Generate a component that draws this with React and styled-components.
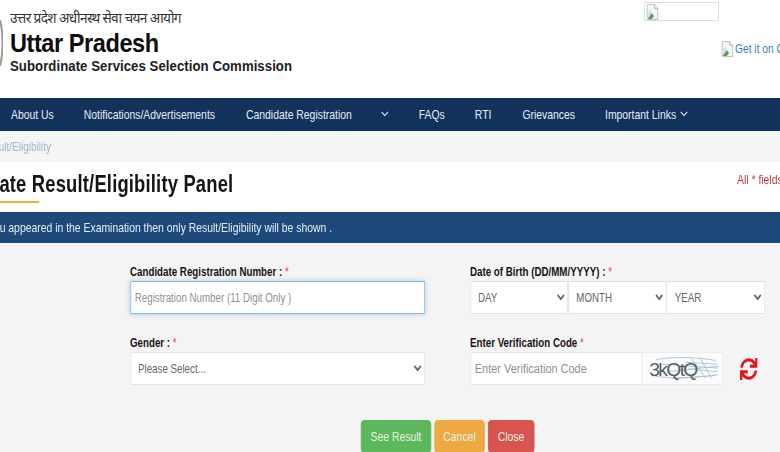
import React from "react";
import styled, { createGlobalStyle } from "styled-components";
import { FaSync } from "react-icons/fa";

/* The reference is a horizontally condensed capture: the lower part of the page is
   laid out in a wider space and condensed as a whole, so X() converts real pixels. */
const K = 0.8;
const X = (n) => `${n / K}px`;

const Global = createGlobalStyle`
  html, body { margin: 0; padding: 0; background: #fff; }
  * { box-sizing: border-box; }
  body { font-family: "Liberation Sans", Arial, sans-serif; }
`;
const Page = styled.div`
  width: 780px; height: 452px; overflow: hidden; display: flex; flex-direction: column;
  background: #fff; filter: blur(0.35px);
`;
const Header = styled.header`
  height: 98px; flex: none; display: flex; justify-content: space-between; overflow: hidden;
`;
const Brand = styled.div`
  display: flex; align-items: flex-start; gap: 7px; margin-left: -1px;
`;
const Emblem = styled.svg`
  width: 4px; height: 46px; margin-top: 20px; flex: none;
`;
const BrandText = styled.div`
  display: flex; flex-direction: column; padding-top: 8px; color: #111;
  transform: scaleX(0.94); transform-origin: left top; white-space: nowrap;
`;
const Hindi = styled.div`
  font-family: "Noto Sans", "Noto Sans Devanagari", "Lohit Devanagari", "Liberation Serif", serif;
  font-size: 14.5px; line-height: 19px; color: #333; letter-spacing: -0.65px;
`;
const BrandName = styled.div`
  font-size: 25px; line-height: 26px; font-weight: 700; margin-top: 3px; color: #0d0d0d; letter-spacing: -0.45px;
`;
const BrandSub = styled.div`
  font-size: 14px; line-height: 18px; font-weight: 700; margin-top: 1px; letter-spacing: 0.07px; color: #1c1c1c;
`;
const Aside = styled.div`
  display: flex; flex-direction: column; align-items: flex-end; width: 136px; flex: none; overflow: hidden;
`;
const BrokenBox = styled.div`
  width: 75px; height: 19px; margin: 2px 61px 0 0; border: 1px solid #ddd; display: flex; padding: 1px;
`;
const StoreLink = styled.div`
  display: flex; align-items: center; align-self: flex-start; margin: 20px 0 0 77px; white-space: nowrap;
  font-size: 12.5px; color: #3d7ab5;
`;
const StoreText = styled.span`
  display: inline-block; transform: scaleX(0.82); transform-origin: left center; margin-left: 1px;
`;
const Condensed = styled.div`
  width: ${X(780)}; flex: 1; min-height: 0; display: flex; flex-direction: column;
  transform: scaleX(${K}); transform-origin: left top;
`;
const Nav = styled.nav`
  height: 33px; flex: none; background: linear-gradient(#12335c, #103159); border-top: 1px solid #0d2a50;
  display: flex; align-items: center; padding: 0 0 2px ${X(11)}; color: #e9eef4; font-size: 13px;
`;
const NavItem = styled.div`
  margin-right: ${(p) => X(p.$gap)}; display: flex; align-items: center; gap: ${X(4)}; white-space: nowrap;
`;
const CrumbBand = styled.div`
  background: #f5f5f5; flex: none;
`;
const Crumb = styled.div`
  height: 31px; display: flex; align-items: center; justify-content: flex-end;
  width: ${X(51)}; white-space: nowrap; color: #9db5cf; font-size: 12.5px;
`;
const TitleRow = styled.div`
  height: 50px; flex: none; display: flex; justify-content: space-between; background: #fff; overflow: hidden;
`;
const TitleWrap = styled.div`
  margin-left: ${X(-64)}; padding-top: 9px;
`;
const Title = styled.h1`
  margin: 0; font-size: 23px; line-height: 26px; font-weight: 700; color: #141414; white-space: nowrap; letter-spacing: 0.22px;
`;
const TitleRule = styled.div`
  width: ${X(103)}; height: 2px; background: #ecb33c; margin-top: 4px;
`;
const Required = styled.div`
  flex: none; width: ${X(43)}; padding-top: 10px; font-size: 13px; color: #c23a3f; white-space: nowrap;
`;
const Notice = styled.div`
  height: 31px; flex: none; background: #1d4a7a; color: #e6edf4; font-size: 13px;
  display: flex; align-items: center; white-space: nowrap; overflow: hidden;
`;
const NoticeText = styled.span`
  margin-left: ${X(-20)};
`;
const Body = styled.div`
  flex: 1; background: #f5f4f4; padding: 22px 0 0 ${X(130)}; display: flex; flex-direction: column;
`;
const Grid = styled.div`
  display: grid; grid-template-columns: ${X(295)} ${X(295)}; column-gap: ${X(45)}; row-gap: 22px;
`;
const Field = styled.div`
  display: flex; flex-direction: column;
`;
const Label = styled.label`
  font-size: 12.2px; line-height: 14px; font-weight: 700; color: #1b1216; height: 16px; white-space: nowrap;
`;
const Star = styled.span`
  color: #d9534f; font-weight: 400;
`;
const Input = styled.input`
  height: 33px; width: 100%; background: #fff; border: 1px solid ${(p) => (p.$focus ? "#86b7dd" : "#e3e3e3")};
  box-shadow: ${(p) => (p.$focus ? "0 0 6px rgba(102,175,233,.55)" : "none")};
  font: 12.2px "Liberation Sans", Arial, sans-serif; padding: 0 ${X(4)}; outline: none; color: #555;
  &::placeholder { color: #8f8f8f; opacity: 1; }
`;
const Select = styled.select`
  height: 33px; width: 100%; background-color: #fff; border: 1px solid #e3e3e3; border-radius: 0; color: #666;
  font: 12.2px "Liberation Sans", Arial, sans-serif; padding: 0 5px; outline: none;
`;
const DateRow = styled.div`
  display: grid; grid-template-columns: repeat(3, 1fr);
`;
const CodeRow = styled.div`
  display: flex; align-items: center;
`;
const CodeInput = styled(Input)`
  width: ${X(172)}; flex: none; font-size: 13.7px;
`;
const Captcha = styled.svg`
  width: ${X(81)}; height: 33px; flex: none; background: #fbfbfb; border: 1px solid #ececec; border-left: 0;
`;
const Refresh = styled.div`
  margin-left: ${X(17)}; color: #e3141c; display: flex; font-size: 22px;
`;
const Actions = styled.div`
  display: flex; gap: ${X(3)}; margin: 35px 0 0 ${X(231)};
`;
const Btn = styled.button`
  height: 33px; width: ${(p) => X(p.$w)}; background: ${(p) => p.$bg}; border: 1px solid ${(p) => p.$bg}; border-radius: 4px;
  font: 13px "Liberation Sans", Arial, sans-serif; padding: 0; color: #eaf2e8;
`;
const BrokenIcon = () => (
  <svg width="13" height="16" viewBox="0 0 16 16" preserveAspectRatio="none" style={{ flex: "none" }}>
    <path d="M1.5 .5h9l4 4v11h-13z" fill="#f4f6fa" stroke="#b4bcc8" />
    <path d="M10.5 .5v4h4" fill="#dfe4ec" stroke="#b4bcc8" />
    <path d="M2 15l5-6 3 3-3 3z" fill="#5e9e4a" />
    <path d="M2 9l3-3 2 2-5 5z" fill="#cfe0f5" />
  </svg>
);
const Chevron = () => (
  <svg width="10" height="6" viewBox="0 0 10 6"><path d="M1 1l4 3.5L9 1" fill="none" stroke="#dfe6ee" strokeWidth="1.2" /></svg>
);

export default function App() {
  return (
    <Page>
      <Global />
      <Header>
        <Brand>
          <Emblem viewBox="0 0 4 46"><path d="M1 0c2 8 2.6 15 2.6 23S3 38 1 46" fill="none" stroke="#9a9a9a" strokeWidth="2" /></Emblem>
          <BrandText>
            <Hindi>उत्तर प्रदेश अधीनस्थ सेवा चयन आयोग</Hindi>
            <BrandName>Uttar Pradesh</BrandName>
            <BrandSub>Subordinate Services Selection Commission</BrandSub>
          </BrandText>
        </Brand>
        <Aside>
          <BrokenBox><BrokenIcon /></BrokenBox>
          <StoreLink><BrokenIcon /><StoreText>Get it on Google Play</StoreText></StoreLink>
        </Aside>
      </Header>
      <Condensed>
        <Nav>
          <NavItem $gap={30}>About Us</NavItem>
          <NavItem $gap={31}>Notifications/Advertisements</NavItem>
          <NavItem $gap={29}>Candidate Registration</NavItem>
          <NavItem $gap={30}><Chevron /></NavItem>
          <NavItem $gap={30}>FAQs</NavItem>
          <NavItem $gap={31}>RTI</NavItem>
          <NavItem $gap={30}>Grievances</NavItem>
          <NavItem $gap={0}>Important Links <Chevron /></NavItem>
        </Nav>
        <CrumbBand><Crumb>Result/Eligibility</Crumb></CrumbBand>
        <TitleRow>
          <TitleWrap>
            <Title>Candidate Result/Eligibility Panel</Title>
            <TitleRule />
          </TitleWrap>
          <Required>All * fields are mandatory</Required>
        </TitleRow>
        <Notice><NoticeText>If you appeared in the Examination then only Result/Eligibility will be shown .</NoticeText></Notice>
        <Body>
          <Grid>
            <Field>
              <Label>Candidate Registration Number : <Star>*</Star></Label>
              <Input $focus placeholder="Registration Number (11 Digit Only )" />
            </Field>
            <Field>
              <Label>Date of Birth (DD/MM/YYYY) : <Star>*</Star></Label>
              <DateRow>
                <Select><option>DAY</option></Select>
                <Select><option>MONTH</option></Select>
                <Select><option>YEAR</option></Select>
              </DateRow>
            </Field>
            <Field>
              <Label>Gender : <Star>*</Star></Label>
              <Select><option>Please Select...</option></Select>
            </Field>
            <Field>
              <Label>Enter Verification Code <Star>*</Star></Label>
              <CodeRow>
                <CodeInput placeholder="Enter Verification Code" />
                <Captcha viewBox="0 0 81 33" preserveAspectRatio="none">
                  <g stroke="#a8c8d6" strokeWidth="1" fill="none">
                    <path d="M14 7c15-3 40-3 60 1M20 12l56 4M25 20l52-6M10 24c20 4 40 3 66-1M50 6l14 21M58 5l12 22M30 27l44-3M44 10l32 2M46 17l30 3" />
                  </g>
                  <text x="7" y="24" fontFamily="Liberation Sans, sans-serif" fontSize="19.5" fill="#555e62" letterSpacing="-1.7">3kQtQ</text>
                </Captcha>
                <Refresh><FaSync /></Refresh>
              </CodeRow>
            </Field>
          </Grid>
          <Actions>
            <Btn $w={70} $bg="#5cb85c">See Result</Btn>
            <Btn $w={51} $bg="#eea943">Cancel</Btn>
            <Btn $w={46} $bg="#d9534f">Close</Btn>
          </Actions>
        </Body>
      </Condensed>
    </Page>
  );
}
